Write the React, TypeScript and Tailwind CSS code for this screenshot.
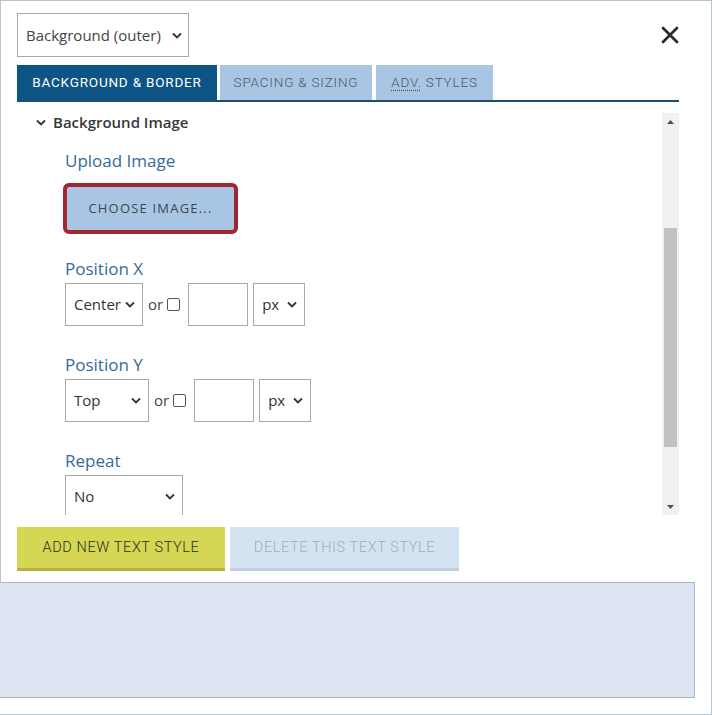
import React from "react";

const sans = "font-['Open_Sans',sans-serif]";
const din = "font-['Roboto',sans-serif]";

const Chevron = ({ className = "" }: { className?: string }) => (
  <svg width="10" height="7" viewBox="0 0 10 7" className={className}>
    <path d="M1 1.5 L5 5.5 L9 1.5" fill="none" stroke="#333" strokeWidth="1.8" />
  </svg>
);

interface FakeSelectProps {
  value: string;
  width: string;
}

const FakeSelect: React.FC<FakeSelectProps> = ({ value, width }) => (
  <div
    className={`${width} h-[43px] border border-[#a9a9a9] bg-white flex items-center justify-between pl-2 pr-[7px] text-[15px] text-[#333]`}
  >
    <span>{value}</span>
    <Chevron />
  </div>
);

const Checkbox = () => (
  <span className="inline-block w-[13px] h-[13px] border border-[#555] rounded-[2px] bg-white" />
);

const PositionRow = ({
  value,
  selectWidth,
}: {
  value: string;
  selectWidth: string;
}) => (
  <div className="flex items-center">
    <FakeSelect value={value} width={selectWidth} />
    <span className="ml-[5px] mr-[4px] text-[15px] text-[#444]">or</span>
    <Checkbox />
    <div className="ml-[8px] w-[60px] h-[43px] border border-[#a9a9a9] bg-white" />
    <div className="ml-[5px]">
      <FakeSelect value="px" width="w-[52px]" />
    </div>
  </div>
);

const Label = ({ children }: { children: React.ReactNode }) => (
  <div className="text-[17px] leading-[22px] text-[#366a9a]">{children}</div>
);

export default function App() {
  return (
    <div
      className={`${sans} w-[712px] h-[715px] bg-white border-t border-r border-b border-[#bcc6d0] flex flex-col`}
    >
      <div className="border-l border-[#c4c4c4] pl-4 pr-[32px] pt-3 pb-[11px]">
        {/* header */}
        <div className="flex items-center justify-between">
          <div className="w-[172px] h-[44px] border border-[#a9a9a9] flex items-center justify-between pl-2 pr-[6px] text-[15px] text-[#444]">
            <span>Background (outer)</span>
            <Chevron />
          </div>
          <svg width="18" height="18" viewBox="0 0 18 18">
            <path
              d="M2 2 L16 16 M16 2 L2 16"
              stroke="#2b2b2b"
              strokeWidth="2.8"
              strokeLinecap="round"
            />
          </svg>
        </div>

        {/* tabs */}
        <div className={`${din} mt-[8px] flex border-b-2 border-[#1e4d6e] h-[37px] text-[13.5px] tracking-[0.8px]`}>
          <div className="w-[200px] bg-[#0c5386] text-white font-normal flex items-center justify-center">
            BACKGROUND &amp; BORDER
          </div>
          <div className="ml-[3px] w-[152px] bg-[#a8c6e4] text-[#4b5866] font-light flex items-center justify-center">
            SPACING &amp; SIZING
          </div>
          <div className="ml-[4px] w-[117px] bg-[#a8c6e4] text-[#4b5866] font-light flex items-center justify-center">
            <abbr className="underline decoration-dotted underline-offset-2">ADV.</abbr>
            &nbsp;STYLES
          </div>
        </div>

        {/* scroll area */}
        <div className="mt-[11px] h-[402px] flex">
          <div className="flex-1 overflow-hidden">
            <div className="flex items-center h-[18px] pl-[19px] text-[15px] font-semibold text-[#383838]">
              <Chevron className="mr-[7px]" />
              Background Image
            </div>
            <div className="pl-[48px]">
              <div className="mt-[19px]">
                <Label>Upload Image</Label>
              </div>
              <div className="mt-[11px] -ml-[2px] w-[175px] h-[51px] border-[4px] border-[#a3252f] rounded-[6px] bg-[#a8c6e4] flex items-center justify-center">
                <span className="text-[13px] tracking-[1.2px] text-[#3c4650]">CHOOSE IMAGE...</span>
              </div>
              <div className="mt-[24px] mb-[3px]">
                <Label>Position X</Label>
              </div>
              <PositionRow value="Center" selectWidth="w-[78px]" />
              <div className="mt-[28px] mb-[3px]">
                <Label>Position Y</Label>
              </div>
              <PositionRow value="Top" selectWidth="w-[84px]" />
              <div className="mt-[28px] mb-[3px]">
                <Label>Repeat</Label>
              </div>
              <FakeSelect value="No" width="w-[118px]" />
            </div>
          </div>
          {/* scrollbar */}
          <div className="w-[17px] bg-[#f1f1f1] flex flex-col items-center">
            <div className="h-[17px] flex items-center justify-center">
              <svg width="7" height="4" viewBox="0 0 7 4">
                <path d="M0 4 L3.5 0 L7 4 Z" fill="#505050" />
              </svg>
            </div>
            <div className="mt-[98px] w-[13px] h-[219px] bg-[#c1c1c1]" />
            <div className="flex-1" />
            <div className="h-[17px] flex items-center justify-center">
              <svg width="7" height="4" viewBox="0 0 7 4">
                <path d="M0 0 L3.5 4 L7 0 Z" fill="#505050" />
              </svg>
            </div>
          </div>
        </div>

        {/* bottom buttons */}
        <div className={`${din} mt-[12px] flex gap-[5px] text-[14.5px] font-light tracking-[0.6px]`}>
          <div className="w-[208px] h-[44px] bg-[#d4d654] border-b-[3px] border-[#b3b53c] text-[#2e2e22] flex items-center justify-center">
            ADD NEW TEXT STYLE
          </div>
          <div className="w-[229px] h-[44px] bg-[#d4e3f2] border-b-[3px] border-[#c2cfdc] text-[#a5adb7] flex items-center justify-center">
            DELETE THIS TEXT STYLE
          </div>
        </div>
      </div>

      {/* lower panel */}
      <div className="w-[695px] h-[116px] bg-[#dbe4f0] border border-l-0 border-[#aab7c6]" />
    </div>
  );
}
